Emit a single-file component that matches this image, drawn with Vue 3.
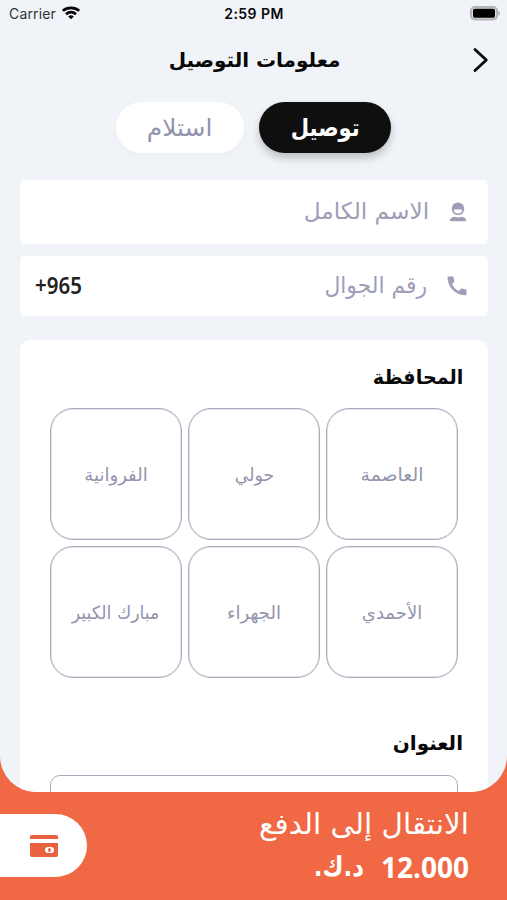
<script setup>
import { ref } from 'vue'

const mode = ref('delivery')
const governorates = [
  { name: 'العاصمة', width: 'w-a' },
  { name: 'حولي', width: 'w-b' },
  { name: 'الفروانية', width: 'w-c' },
  { name: 'الأحمدي', width: 'w-d' },
  { name: 'الجهراء', width: 'w-e' },
  { name: 'مبارك الكبير', width: 'w-f' },
]
const selected = ref('')
</script>

<template>
  <div class="screen" dir="rtl">
    <main class="content">
      <div class="status" dir="ltr">
        <div class="carrier">
          <span>Carrier</span>
          <svg width="18" height="14" viewBox="0 0 18 14" fill="none" stroke="#080808" stroke-width="2.8">
            <path d="M.8 4.800C5.400.8 12.600.8 17.200 4.800" />
            <path d="M4 8.200c2.900-2.600 7.100-2.600 10 0" />
            <path d="M6.200 10.400c1.700-1.500 3.900-1.500 5.600 0L9 13.200z" fill="#080808" stroke="none" />
          </svg>
        </div>
        <span class="clock">2:59 PM</span>
        <svg class="battery" width="31" height="15" viewBox="0 0 31 15">
          <rect x="1" y="1" width="26" height="12.600" rx="4" fill="#ddd" stroke="#b4b4b4" stroke-width="2" />
          <rect x="3" y="2.800" width="22" height="9" rx="1.800" fill="#000" />
          <path d="M28.400 5v4.600c2.200-.8 2.200-3.800 0-4.600z" fill="#aaa" />
        </svg>
      </div>

      <header class="nav">
        <h1><span class="t title">معلومات التوصيل</span></h1>
        <button class="back" aria-label="رجوع">
          <svg width="16" height="26" viewBox="0 0 16 26" fill="none" stroke="#080808" stroke-width="2.800" stroke-linecap="round" stroke-linejoin="round">
            <path d="M2 2.500 13.300 13 2 23.500" />
          </svg>
        </button>
      </header>

      <div class="tabs">
        <button class="tab on-size" :class="{ active: mode === 'delivery' }" @click="mode = 'delivery'">
          <span class="t tab-a">توصيل</span>
        </button>
        <button class="tab" :class="{ active: mode === 'pickup' }" @click="mode = 'pickup'">
          <span class="t tab-b">استلام</span>
        </button>
      </div>

      <label class="field name">
        <svg width="18" height="20" viewBox="0 0 18 20" fill="#9e9eb7">
          <circle cx="9" cy="6.800" r="6.300" />
          <path d="M4.800 7.600h8.400c0 2.600-1.600 4-4.200 4s-4.200-1.400-4.200-4z" fill="#fff" />
          <path d="M.8 19.200c0-2.500 1.500-4.200 4.600-4.500 2.200 1 5 1 7.200 0 3.100.3 4.600 2 4.600 4.500z" />
        </svg>
        <span class="t ph-a">الاسم الكامل</span>
      </label>

      <label class="field phone">
        <svg width="20" height="20" viewBox="0 0 20 20" fill="#9e9eb7">
          <path d="M1.500.5h4c.6 0 1 .4 1.100 1 .1 1.200.3 2.300.7 3.400.1.400 0 .8-.3 1.100L5 8.200c1.500 3 3.800 5.300 6.800 6.800l2.200-2.200c.3-.3.7-.4 1.100-.3 1.100.4 2.200.6 3.400.7.600.1 1 .5 1 1.100v3.900c0 .6-.4 1.100-1 1.100C8.700 19.300.5 11.200.5 1.500c0-.6.4-1 1-1z" />
        </svg>
        <span class="t ph-b">رقم الجوال</span>
        <span class="code" dir="ltr">+965</span>
      </label>

      <section class="card">
        <h2><span class="t head-a">المحافظة</span></h2>
        <div class="grid">
          <button v-for="g in governorates" :key="g.name" class="tile" :class="{ chosen: selected === g.name }" @click="selected = g.name">
            <span class="t" :class="g.width">{{ g.name }}</span>
          </button>
        </div>
        <h2 class="second"><span class="t head-b">العنوان</span></h2>
        <div class="address"></div>
      </section>
    </main>

    <footer class="checkout">
      <div class="summary">
        <div class="pay"><span class="t pay-a">الانتقال إلى الدفع</span></div>
        <div class="total">
          <span class="amount">12.000</span>
          <span class="t cur">د.ك.</span>
        </div>
      </div>
      <div class="wallet">
        <svg width="28" height="22" viewBox="0 0 28 22">
          <path d="M0 4V2C0 .8.8 0 2 0h24c1.200 0 2 .8 2 2v2z" fill="#e9613f" />
          <path d="M0 8h28v12c0 1.200-.8 2-2 2H2c-1.200 0-2-.8-2-2z" fill="#e9613f" />
          <rect x="15" y="12" width="9" height="6" rx="3" fill="#fff" />
          <ellipse cx="19.500" cy="15" rx="1.400" ry="2" fill="#e9613f" />
        </svg>
      </div>
    </footer>
  </div>
</template>

<style>
body { margin: 0; }
</style>

<style scoped>
.screen {
  width: 507px;
  height: 900px;
  overflow: hidden;
  background: #f16844;
  font-family: "DejaVu Sans", sans-serif;
  color: #080808;
}
.content {
  height: 792px;
  overflow: hidden;
  box-sizing: border-box;
  border-radius: 0 0 36px 36px;
  background: #f0f4f8;
}
button { border: 0; padding: 0; background: none; font: inherit; color: inherit; }
h1, h2 { margin: 0; font-weight: 700; }
.t { display: inline-block; white-space: nowrap; transform-origin: right center; }
.tab .t, .tile .t { transform-origin: center; }

.status {
  display: grid;
  grid-template-columns: 1fr auto 1fr;
  align-items: center;
  height: 28px;
  padding: 0 6px 0 9px;
  font: 14px/28px Inter, sans-serif;
}
.carrier { display: flex; align-items: center; gap: 6px; color: #333; }
.carrier svg { margin-top: -2px; }
.carrier span { letter-spacing: .15px; }
.clock { font-weight: 600; letter-spacing: .45px; margin-right: 2px; }
.battery { justify-self: end; margin-top: -1px; }

.nav {
  display: grid;
  grid-template-columns: 40px 1fr 40px;
  align-items: center;
  height: 64px;
}
.nav h1 { grid-column: 2; grid-row: 1; padding-left: 2px; text-align: center; font-size: 20px; line-height: 64px; }
.back { grid-column: 1; grid-row: 1; height: 26px; padding-right: 5px; }
.back svg { display: block; margin-right: 13px; }

.tabs { display: flex; justify-content: center; gap: 15px; padding-top: 10px; }
.tab {
  width: 128px;
  height: 51px;
  border-radius: 26px;
  background: #fff;
  color: #9294ad;
  font-size: 24px;
  box-shadow: 0 4px 9px rgba(0, 0, 0, .02);
}
.on-size { width: 132px; }
.tab.active { background: #100f10; color: #fff; font-weight: 700; box-shadow: 0 5px 8px rgba(0, 0, 0, .22); }
.tab-a { transform: scaleX(.88); }
.tab-b { transform: scaleX(1.04); }

.field {
  display: flex;
  align-items: center;
  margin: 0 19px 0 20px;
  padding: 0 20px 0 15px;
  background: #fff;
  border-radius: 5px;
  color: #9e9eb7;
  font-size: 23px;
}
.name { height: 64px; margin-top: 27px; }
.phone { height: 60px; margin-top: 12px; }
.name svg { margin: 0 1px 0 20px; }
.phone svg { margin: 0 1px 0 20px; }
.ph-a { line-height: 60px; padding-bottom: 2px; transform: scaleX(1.01); }
.ph-b { line-height: 58px; padding-bottom: 2px; transform: scaleX(.95); }
.code {
  margin: 0 auto 2px 0;
  color: #222;
  font: 600 23px "Noto Sans", sans-serif;
  transform: scaleX(.89);
  transform-origin: left center;
}

.card {
  height: 600px;
  margin: 24px 19px 0 20px;
  padding: 22px 25px 0 30px;
  box-sizing: border-box;
  background: #fff;
  border-radius: 10px;
}
h2 { height: 46px; font-size: 20px; line-height: 30px; }
.head-a { transform: scaleX(.96); }
.grid {
  display: grid;
  grid-template-columns: repeat(3, 132px);
  grid-auto-rows: 132px;
  gap: 6px;
  width: 408px;
  margin-right: 5px;
}
.tile {
  box-sizing: border-box;
  border: 1px solid #aaaabd;
  box-shadow: inset 0 0 0 .5px rgba(170, 170, 189, .6);
  border-radius: 23px;
  color: #9294ad;
  font-size: 18px;
  line-height: 26px;
  padding-top: 2px;
}
.tile.chosen { border-color: #100f10; color: #100f10; }
.w-a { transform: scaleX(1.05); }
.w-b { transform: scaleX(.96); }
.w-f { transform: scaleX(.96); }
.second { margin-top: 50px; height: 47px; }
.address {
  width: 408px;
  height: 60px;
  margin-right: 5px;
  box-sizing: border-box;
  border: 1px solid #aaaabd;
  border-radius: 10px;
}

.checkout { display: flex; justify-content: space-between; height: 108px; padding-right: 38px; color: #fff; }
.summary { padding-top: 10px; }
.pay { font-size: 29px; line-height: 44px; height: 42px; }
.pay-a { transform: scaleX(1.015); }
.total { display: flex; gap: 17px; font-weight: 700; font-size: 27px; line-height: 46px; }
.amount { font-family: "Noto Sans", sans-serif; font-size: 28px; }
.cur { transform: scaleX(.85); }
.wallet {
  display: flex;
  align-items: center;
  justify-content: flex-end;
  direction: ltr;
  box-sizing: border-box;
  width: 87px;
  height: 63px;
  margin-top: 22px;
  padding-right: 29px;
  background: #fff;
  border-radius: 0 32px 32px 0;
}
</style>
